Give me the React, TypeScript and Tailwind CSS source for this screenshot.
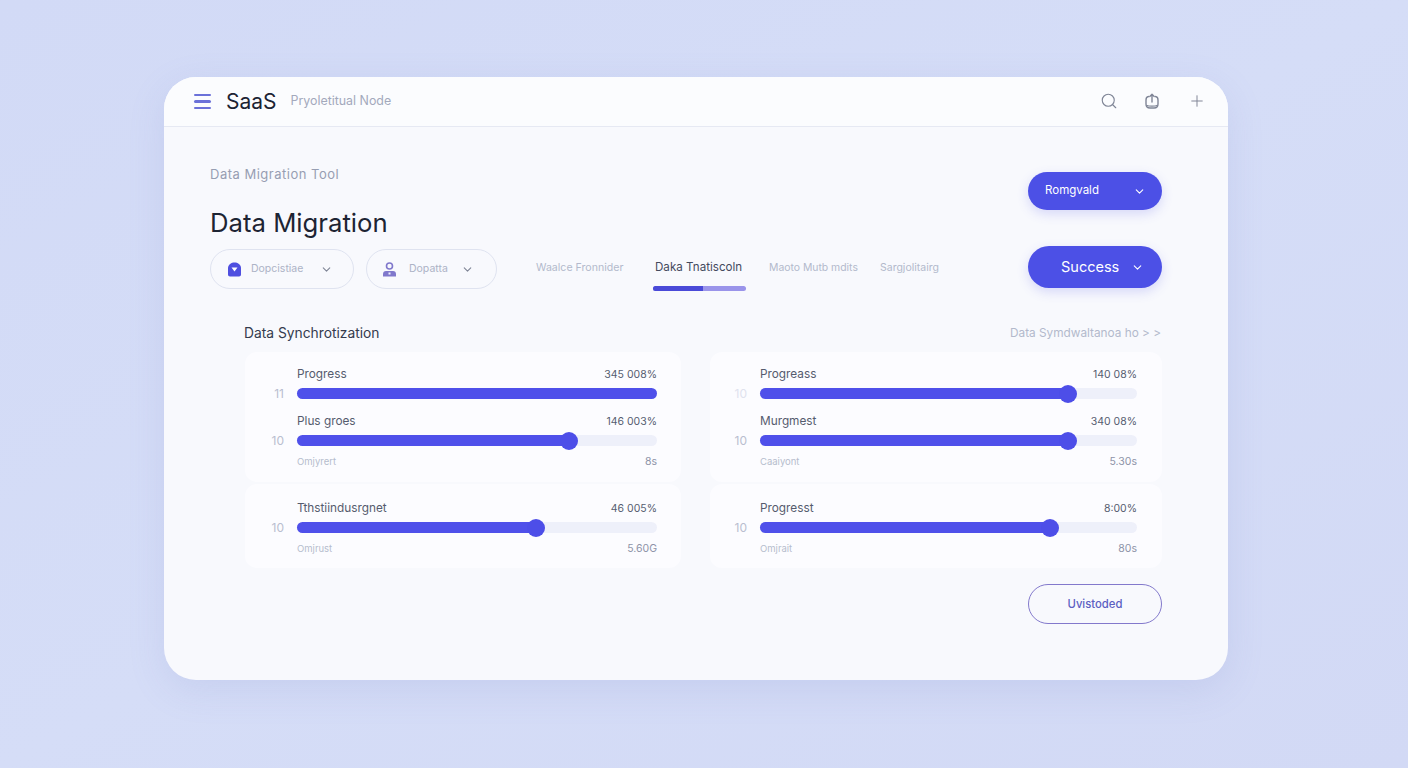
import { ChevronDown, Search, Plus } from "lucide-react";

function Bar({ pct, thumb }: { pct: number; thumb: boolean }) {
  return (
    <div className="relative h-[11px] flex-1 rounded-full bg-[#eef0fa]">
      <div className="h-full rounded-full bg-[#4f50ea]" style={{ width: `${pct}%` }} />
      {thumb && (
        <div
          className="absolute top-1/2 h-[18px] w-[18px] -translate-x-1/2 -translate-y-1/2 rounded-full bg-[#4d4ee8]"
          style={{ left: `${pct}%` }}
        />
      )}
    </div>
  );
}

function Row({ label, value, num, pct, thumb, left, faded, mt }: { label: string; value: string; num: string; pct: number; thumb: boolean; left: number; faded?: boolean; mt?: boolean }) {
  return (
    <div className={mt ? "mt-[11px]" : ""}>
      <div className="flex h-5 items-center justify-between pt-[3px] text-[#555b6e]" style={{ paddingLeft: left }}>
        <span className="text-[11.800px]">{label}</span>
        <span className="text-[10.5px] text-[#565c70]">{value}</span>
      </div>
      <div className="mt-[5px] flex h-[11px] items-center">
        <span className={`shrink-0 pr-[13px] text-right text-[12px] leading-none ${faded ? "text-[#dfe2ee]" : "text-[#b9bed0]"}`} style={{ width: left }}>
          {num}
        </span>
        <Bar pct={pct} thumb={thumb} />
      </div>
    </div>
  );
}

function Foot({ label, value, left }: { label: string; value: string; left: number }) {
  return (
    <div className="mt-[6px] flex h-5 items-center justify-between text-[9.5px] text-[#b6bccd]" style={{ paddingLeft: left }}>
      <span>{label}</span>
      <span className="text-[10.5px] text-[#8d93a8]">{value}</span>
    </div>
  );
}

function BagIcon() {
  return (
    <svg width="16" height="17" viewBox="0 0 16 17" fill="none" stroke="#7f8596" strokeWidth="1.4" strokeLinecap="round" strokeLinejoin="round">
      <path d="M4.500 3.500C2.600 3.800 2 5 2 7v4c0 2.500 1.500 4 4 4h4c2.500 0 4-1.500 4-4V7c0-2-.6-3.200-2.500-3.500" />
      <path d="M8 9V1.500M5.800 3.500 8 1.300l2.200 2.200" />
      <path d="M3 12.500c1.500.8 8.500.8 10 0" />
    </svg>
  );
}

function ShieldIcon() {
  return (
    <svg width="15" height="15" viewBox="0 0 15 15">
      <path d="M7.500.5C10.500.5 14 2.500 14 6v6.500c0 1.200-.8 2-2 2H3c-1.200 0-2-.8-2-2V6C1 2.500 4.500.5 7.500.5z" fill="#4f4fe0" />
      <path d="M4.500 5.500h6L7.500 9.500z" fill="#ffffff" />
    </svg>
  );
}

function UserIcon() {
  return (
    <svg width="15" height="15" viewBox="0 0 15 15" fill="none">
      <circle cx="7.500" cy="4" r="3" stroke="#8078cc" strokeWidth="1.600" />
      <path d="M1 14.500v-2.500c0-1.800 1.200-3 3-3h7c1.800 0 3 1.200 3 3v2.500z" fill="#8078cc" />
      <rect x="6.500" y="10.500" width="2" height="2" fill="#eef0fb" />
    </svg>
  );
}

export default function App() {
  return (
    <div className="flex h-[768px] w-full flex-col overflow-hidden bg-gradient-to-br from-[#d2daf6] via-[#d5ddf7] to-[#d2d9f5] pl-[164px] pt-[77px] font-['Inter',sans-serif]">
      <div className="flex h-[603px] w-[1064px] flex-col overflow-hidden rounded-[32px] bg-[#f8f9fd] shadow-[0_10px_36px_rgba(125,135,205,0.16)]">
        <header className="flex h-[50px] shrink-0 items-center border-b border-[#e6e9f3] bg-[#fbfcfe] pl-[30px] pr-[22px]">
          <div className="flex w-[17px] flex-col gap-[4px]">
            <span className="h-[2.500px] rounded-full bg-[#6b71d9]" />
            <span className="h-[2.500px] rounded-full bg-[#6b71d9]" />
            <span className="h-[2.500px] rounded-full bg-[#6b71d9]" />
          </div>
          <span className="ml-[15px] text-[21px] text-[#1c2333]">SaaS</span>
          <span className="ml-[14px] text-[12.400px] text-[#a3a9bc]">Pryoletitual Node</span>
          <div className="-mt-px ml-auto flex items-center">
            <Search size={18} strokeWidth={1.500} className="text-[#7f8596]" />
            <span className="ml-[26px]"><BagIcon /></span>
            <Plus size={18} strokeWidth={1.300} className="ml-[28px] text-[#7f8596]" />
          </div>
        </header>

        <div className="flex flex-1 flex-col pl-[46px] pr-[66px] pt-[38px]">
          <div className="flex justify-between">
            <div>
              <div className="flex h-5 items-center text-[13px] tracking-[0.5px] text-[#979eb2]">Data Migration Tool</div>
              <h1 className="mt-5 flex h-9 items-center text-[25.700px] font-normal text-[#1d2433]">Data Migration</h1>
              <div className="mt-[8px] flex items-center">
                <button className="flex h-10 w-[144px] items-center rounded-full border border-[#dfe3f0] pl-4 pr-[20px] text-[10.5px] text-[#adb3c6]">
                  <ShieldIcon />
                  <span className="ml-[9px]">Dopcistiae</span>
                  <ChevronDown size={13} className="ml-auto text-[#7f8596]" />
                </button>
                <button className="ml-[12px] flex h-10 w-[131px] items-center rounded-full border border-[#dfe3f0] pl-[15px] pr-[22px] text-[10.5px] text-[#adb3c6]">
                  <UserIcon />
                  <span className="ml-[12px]">Dopatta</span>
                  <ChevronDown size={13} className="ml-auto text-[#7f8596]" />
                </button>
                <nav className="-mt-[2px] ml-[39px] flex items-center text-[#b3b9cc]">
                  <span className="w-[88px] whitespace-nowrap text-[10.600px]">Waalce Fronnider</span>
                  <span className="relative ml-[31px] w-[88px] whitespace-nowrap text-[11.600px] text-[#444a5e]">
                    Daka Tnatiscoln
                    <span className="absolute -left-[2px] top-[27px] flex h-[5px] w-[93px] overflow-hidden rounded-full bg-[#9a94ea]">
                      <span className="h-full w-[50px] bg-[#4a4ad8]" />
                    </span>
                  </span>
                  <span className="ml-[26px] w-[89px] whitespace-nowrap text-[10.400px]">Maoto Mutb mdits</span>
                  <span className="ml-[22px] whitespace-nowrap text-[10.500px]">Sargjolitairg</span>
                </nav>
              </div>
            </div>
            <div className="flex w-[134px] flex-col pt-[7px] text-white">
              <button className="flex h-[38px] items-center justify-between rounded-full bg-[#4c50e6] pl-[17px] pr-[16px] text-[11.500px] shadow-[0_4px_12px_rgba(80,85,230,0.2)]">
                <span>Romgvald</span>
                <ChevronDown size={13} />
              </button>
              <button className="mt-[36px] flex h-[42px] items-center justify-between rounded-full bg-[#4c50e6] pl-[33px] pr-[18px] text-[14.500px] shadow-[0_4px_12px_rgba(80,85,230,0.2)]">
                <span>Success</span>
                <ChevronDown size={13} />
              </button>
            </div>
          </div>

          <section className="mt-[34px] pl-[35px]">
            <div className="flex h-5 items-center justify-between">
              <h2 className="-ml-px text-[13.800px] font-normal text-[#343b4d]">Data Synchrotization</h2>
              <span className="pr-px pt-px text-[11.800px] text-[#b3b9cc]">Data Symdwaltanoa ho &gt; &gt;</span>
            </div>
            <div className="mt-[9px] grid grid-cols-[436px_452px] gap-x-[29px] gap-y-[2px]">
              <div className="h-[130px] rounded-xl bg-[#fcfcff] pr-[24px] pt-[11px]">
                <Row label="Progress" value="345 008%" num="11" pct={100} thumb={false} left={52} />
                <Row label="Plus groes" value="146 003%" num="10" pct={75.600} thumb left={52} mt />
                <Foot label="Omjyrert" value="8s" left={52} />
              </div>
              <div className="h-[130px] rounded-xl bg-[#fcfcff] pr-[25px] pt-[11px]">
                <Row label="Progreass" value="140 08%" num="10" pct={81.700} thumb left={50} faded />
                <Row label="Murgmest" value="340 08%" num="10" pct={81.700} thumb left={50} mt />
                <Foot label="Caaiyont" value="5.30s" left={50} />
              </div>
              <div className="h-[84px] rounded-xl bg-[#fcfcff] pr-[24px] pt-[13px]">
                <Row label="Tthstiindusrgnet" value="46 005%" num="10" pct={66.300} thumb left={52} />
                <Foot label="Omjrust" value="5.60G" left={52} />
              </div>
              <div className="h-[84px] rounded-xl bg-[#fcfcff] pr-[25px] pt-[13px]">
                <Row label="Progresst" value="8:00%" num="10" pct={76.800} thumb left={50} />
                <Foot label="Omjrait" value="80s" left={50} />
              </div>
            </div>
            <div className="mt-[16px] flex justify-end">
              <button className="flex h-[40px] w-[134px] items-center justify-center rounded-full border border-[#8379cc] text-[11.300px] font-medium text-[#5c5fc2]">
                Uvistoded
              </button>
            </div>
          </section>
        </div>
      </div>
    </div>
  );
}
